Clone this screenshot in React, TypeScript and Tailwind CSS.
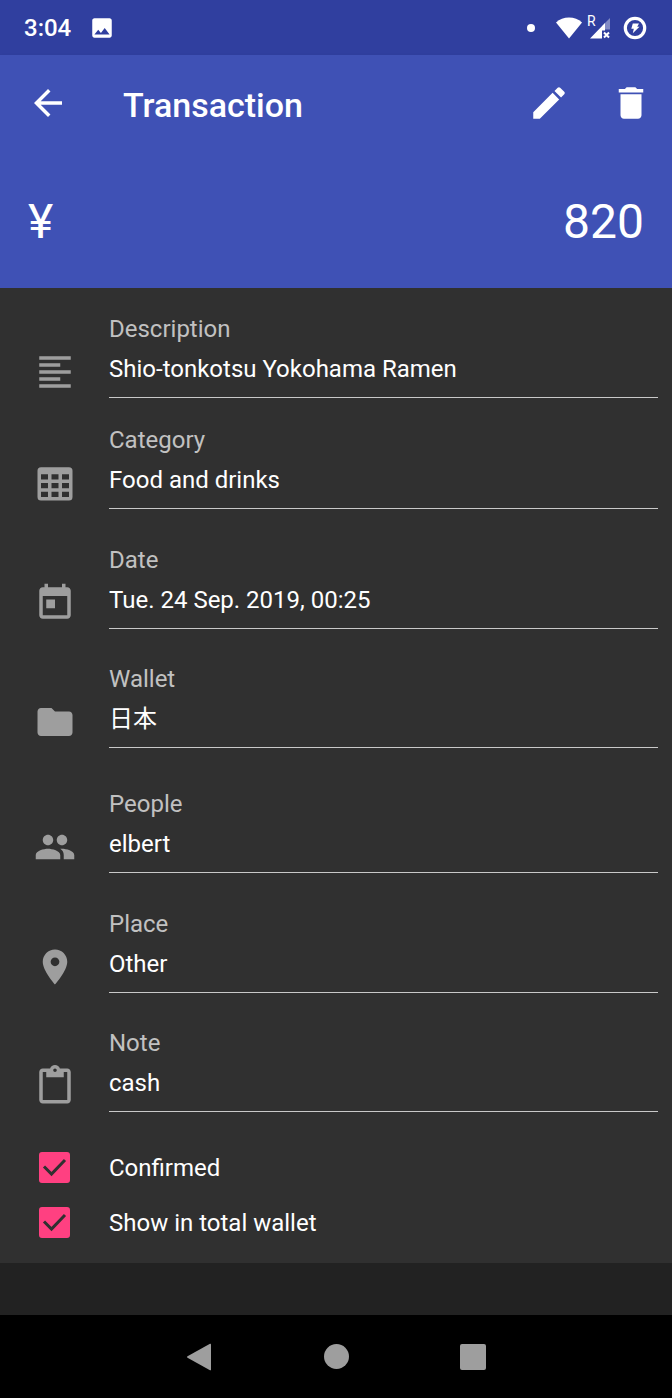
import React, { useState } from 'react';

// Path data on a 24x24 grid
const paths = {
  back: "M20 11H7.83l5.59-5.59L12 4l-8 8 8 8 1.41-1.41L7.83 13H20v-2z",
  edit: "M3 17.25V21h3.75L17.81 9.94l-3.75-3.75L3 17.25zM20.71 7.04c.39-.39.39-1.02 0-1.41l-2.34-2.34c-.39-.39-1.02-.39-1.41 0l-1.83 1.83 3.75 3.75 1.83-1.83z",
  trash: "M6 19c0 1.1.9 2 2 2h8c1.1 0 2-.9 2-2V7H6v12zM19 4h-3.5l-1-1h-5l-1 1H5v2h14V4z",
  image: "M21 19V5c0-1.1-.9-2-2-2H5c-1.1 0-2 .9-2 2v14c0 1.1.9 2 2 2h14c1.1 0 2-.9 2-2zM8.5 13.5l2.5 3.01L14.5 12l4.5 6H5l3.5-4.5z",
  text: "M15 15H3v2h12v-2zm0-8H3v2h12V7zM3 13h18v-2H3v2zm0 8h18v-2H3v2zM3 3v2h18V3H3z",
  table: "M4 3H20A2 2 0 0 1 22 5V20A2 2 0 0 1 20 22H4A2 2 0 0 1 2 20V5A2 2 0 0 1 4 3M4 7V10H8V7H4M10 7V10H14V7H10M20 10V7H16V10H20M4 12V15H8V12H4M4 20H8V17H4V20M10 12V15H14V12H10M10 20H14V17H10V20M20 20V17H16V20H20M20 15V12H16V15H20Z",
  today: "M19 3h-1V1h-2v2H8V1H6v2H5c-1.11 0-1.99.9-1.99 2L3 19c0 1.1.89 2 2 2h14c1.1 0 2-.9 2-2V5c0-1.1-.9-2-2-2zm0 16H5V8h14v11zM7 10h5v5H7z",
  folder: "M10 4H4c-1.1 0-1.99.9-1.99 2L2 18c0 1.1.9 2 2 2h16c1.1 0 2-.9 2-2V8c0-1.1-.9-2-2-2h-8l-2-2z",
  people: "M16 11c1.66 0 2.99-1.34 2.99-3S17.66 5 16 5c-1.66 0-3 1.34-3 3s1.34 3 3 3zm-8 0c1.66 0 2.99-1.34 2.99-3S9.66 5 8 5C6.34 5 5 6.34 5 8s1.34 3 3 3zm0 2c-2.33 0-7 1.17-7 3.5V19h14v-2.5c0-2.33-4.67-3.5-7-3.5zm8 0c-.29 0-.62.02-.97.05 1.16.84 1.97 1.97 1.97 3.45V19h6v-2.5c0-2.33-4.67-3.5-7-3.5z",
  place: "M12 2C8.13 2 5 5.13 5 9c0 5.25 7 13 7 13s7-7.75 7-13c0-3.87-3.13-7-7-7zm0 9.5c-1.38 0-2.5-1.12-2.5-2.5s1.12-2.5 2.5-2.5 2.5 1.12 2.5 2.5-1.12 2.5-2.5 2.5z",
  clipboard: "M19 2h-4.18C14.4.84 13.3 0 12 0c-1.3 0-2.4.84-2.82 2H5c-1.1 0-2 .9-2 2v16c0 1.1.9 2 2 2h14c1.1 0 2-.9 2-2V4c0-1.1-.9-2-2-2zm-7 0c.55 0 1 .45 1 1s-.45 1-1 1-1-.45-1-1 .45-1 1-1zm7 18H5V4h2v3h10V4h2v16z",
};

type IconName = keyof typeof paths;

const Icon = ({ name, className }: { name: IconName; className: string }) => (
  <svg viewBox="0 0 24 24" fill="currentColor" fillRule="evenodd" className={className} aria-hidden="true">
    <path d={paths[name]} />
  </svg>
);

type FieldType = {
  id: string;
  label: string;
  value: string;
  icon: IconName;
  spacing: string;
};

const fields: FieldType[] = [
  { id: "description", label: "Description", value: "Shio-tonkotsu Yokohama Ramen", icon: "text", spacing: "mt-[21px]" },
  { id: "category", label: "Category", value: "Food and drinks", icon: "table", spacing: "mt-[22px]" },
  { id: "date", label: "Date", value: "Tue. 24 Sep. 2019, 00:25", icon: "today", spacing: "mt-[31px]" },
  { id: "wallet", label: "Wallet", value: "日本", icon: "folder", spacing: "mt-[30px]" },
  { id: "people", label: "People", value: "elbert", icon: "people", spacing: "mt-9" },
  { id: "place", label: "Place", value: "Other", icon: "place", spacing: "mt-[31px]" },
  { id: "note", label: "Note", value: "cash", icon: "clipboard", spacing: "mt-[30px]" },
];

const StatusBar = () => (
  <div className="flex h-[55px] items-center bg-[#303f9f] pl-6 pr-[25px]">
    <span className="text-2xl font-medium">3:04</span>
    <Icon name="image" className="ml-[18px] size-[26px]" />
    <div className="ml-auto flex items-center">
      <span className="size-2 rounded-full bg-white" />
      <svg viewBox="0 0 26 22" className="ml-[21px] h-[22px] w-[26px]" fill="currentColor" aria-hidden="true">
        <path d="M13 21.5L0 5.5C3.5 2 8 .5 13 .5s9.5 1.5 13 5z" />
      </svg>
      <div className="relative ml-[7px] h-[22px] w-[22px]">
        <span className="absolute -left-0.5 -top-0.5 text-sm leading-3">R</span>
        <svg viewBox="0 0 22 22" className="size-full" fill="currentColor" aria-hidden="true">
          <path d="M21 1v11.5h-8V9z" opacity=".4" />
          <path d="M1 21.5L16 6v7.5h-3v8z" />
          <path d="M15 15.5l5 5m0-5l-5 5" stroke="currentColor" strokeWidth="2" />
        </svg>
      </div>
      <svg viewBox="0 0 24 24" className="ml-3 size-6" fill="currentColor" aria-hidden="true">
        <circle cx="12" cy="12" r="9.7" fill="none" stroke="currentColor" strokeWidth="3.2" />
        <path d="M9.8 7.5H16l-1.8 3.2h2.3l-6.7 6.6 1-4.5H8.3z" />
      </svg>
    </div>
  </div>
);

const Field = ({ field }: { field: FieldType }) => (
  <div className={`flex items-end pr-3.5 ${field.spacing}`}>
    <div className="flex w-[109px] shrink-0 justify-center pb-[5px]">
      <Icon name={field.icon} className="size-[42px] text-[#9e9e9e]" />
    </div>
    <div className="min-w-0 flex-1 border-b border-[#c8c8c8] pb-2">
      <label htmlFor={field.id} className="block text-2xl leading-10 text-[#c1c1c1]">{field.label}</label>
      <input
        id={field.id}
        type="text"
        readOnly
        defaultValue={field.value}
        className="block h-10 w-full bg-transparent text-2xl leading-10 text-white outline-none"
      />
    </div>
  </div>
);

const CheckRow = ({ id, label }: { id: string; label: string }) => {
  const [checked, setChecked] = useState(true);

  return (
    <div className="flex h-[55px] items-center">
      <div className="grid w-[109px] shrink-0 place-items-center">
        <input
          id={id}
          type="checkbox"
          checked={checked}
          onChange={(e) => setChecked(e.target.checked)}
          className="peer col-start-1 row-start-1 size-[31px] appearance-none rounded-[3px] border-[3px] border-[#c1c1c1] checked:border-[#ff4081] checked:bg-[#ff4081]"
        />
        <svg viewBox="0 0 31 31" className="pointer-events-none invisible col-start-1 row-start-1 size-[31px] peer-checked:visible" aria-hidden="true">
          <path d="M5 14.500l7.500 7.500L26 8" fill="none" stroke="#303030" strokeWidth="3" />
        </svg>
      </div>
      <label htmlFor={id} className="text-2xl text-white">{label}</label>
    </div>
  );
};

const App: React.FC = () => {
  return (
    <div className="flex min-h-screen flex-col bg-[#222222] font-[Roboto,'Noto_Sans_CJK_JP',sans-serif] text-white">
      <StatusBar />

      <header className="bg-[#3f51b5] shadow-[0_3px_4px_rgba(0,0,0,0.3)]">
        <div className="flex h-24 items-center pl-[27px] pr-5">
          <button type="button" aria-label="Back">
            <Icon name="back" className="size-[42px]" />
          </button>
          <h1 className="ml-[54px] mt-1 text-[34px] font-medium">Transaction</h1>
          <button type="button" aria-label="Edit" className="ml-auto">
            <Icon name="edit" className="size-[42px]" />
          </button>
          <button type="button" aria-label="Delete" className="ml-10">
            <Icon name="trash" className="size-[42px]" />
          </button>
        </div>
        <div className="flex h-[137px] items-center justify-between px-7 pt-1 text-5xl">
          <span>¥</span>
          <span>820</span>
        </div>
      </header>

      <main className="bg-[#303030] pb-[13px]">
        {fields.map(field => (
          <Field key={field.id} field={field} />
        ))}
        <div className="mt-7">
          <CheckRow id="confirmed" label="Confirmed" />
          <CheckRow id="total" label="Show in total wallet" />
        </div>
      </main>

      {/* System navigation */}
      <nav className="mt-auto flex h-[83px] justify-center bg-black text-[#9e9e9e]">
        <button type="button" aria-label="System back" className="flex w-[137px] items-center justify-center">
          <svg viewBox="0 0 26 28" className="h-7 w-[26px]" fill="currentColor" aria-hidden="true">
            <path d="M24 .8Q25 .3 25 1.5v25Q25 27.7 24 27.2L1.5 14.8Q.3 14 1.5 13.2z" />
          </svg>
        </button>
        <button type="button" aria-label="Home" className="flex w-[137px] items-center justify-center">
          <span className="size-[25px] rounded-full bg-current" />
        </button>
        <button type="button" aria-label="Recent apps" className="flex w-[137px] items-center justify-center">
          <span className="size-[26px] rounded-xs bg-current" />
        </button>
      </nav>
    </div>
  );
};

export default App;
